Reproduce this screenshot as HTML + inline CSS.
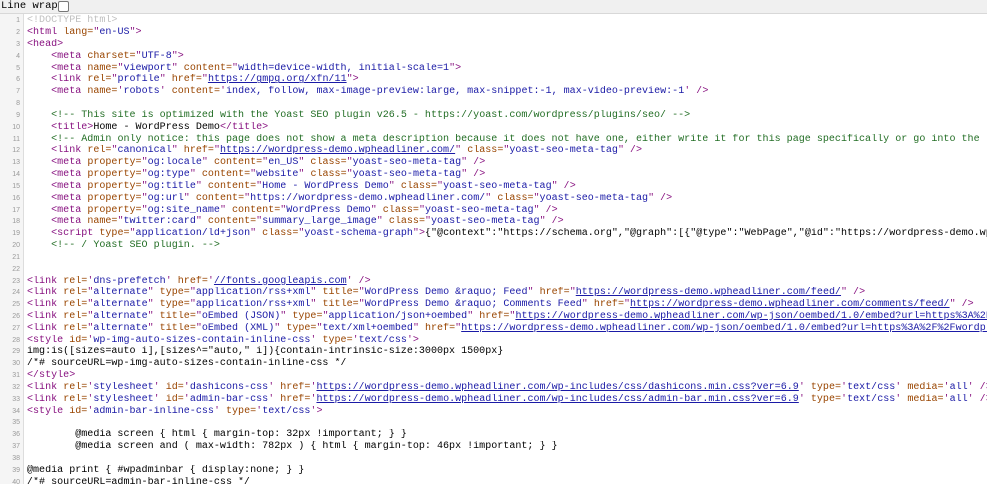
<!DOCTYPE html>
<html><head><meta charset="utf-8"><style>
html,body{margin:0;padding:0;background:#fff;width:987px;height:481px;overflow:hidden}
#bar{position:absolute;left:0;top:0;width:987px;height:13px;background:#f0f0f0;border-bottom:1px solid #d8d8d8;font:10.5px "Liberation Mono",monospace;line-height:13px;color:#000}
#bar span{position:absolute;left:1px;top:0}
#bar i{position:absolute;left:58px;top:1px;width:9px;height:9px;border:1px solid #777;border-radius:2px;background:#fff}
#gut{position:absolute;left:0;top:14px;width:23px;height:470px;background:#f5f5f5;border-right:1px solid #ddd}
#src{position:absolute;left:0;top:15.3px;width:987px}
.r{height:11.84px;line-height:11.84px;white-space:pre;font:10.05px "Liberation Mono",monospace;color:#000;position:relative;overflow:hidden}
.n{position:absolute;left:0;width:20px;text-align:right;font:7px "Liberation Sans",sans-serif;color:#999;line-height:11.84px}
.c0{position:absolute;left:27px;top:0}
.t{color:#881280}.a{color:#994500}.v{color:#1a1aa6}.c{color:#236e25}.d{color:#c0c0c0}.l{color:#1a1aa6;text-decoration:underline}
</style></head><body>
<div id="bar"><span>Line wrap</span><i></i></div>
<div id="gut"></div>
<div id="src">
<div class="r"><span class="n">1</span><span class="c0 d">&lt;!DOCTYPE html&gt;</span></div>
<div class="r"><span class="n">2</span><span class="c0"><span class="t">&lt;html </span><span class="a">lang=</span><span class="t">"</span><span class="v">en-US</span><span class="t">"&gt;</span></span></div>
<div class="r"><span class="n">3</span><span class="c0"><span class="t">&lt;head&gt;</span></span></div>
<div class="r"><span class="n">4</span><span class="c0">    <span class="t">&lt;meta </span><span class="a">charset=</span><span class="t">"</span><span class="v">UTF-8</span><span class="t">"&gt;</span></span></div>
<div class="r"><span class="n">5</span><span class="c0">    <span class="t">&lt;meta </span><span class="a">name=</span><span class="t">"</span><span class="v">viewport</span><span class="t">" </span><span class="a">content=</span><span class="t">"</span><span class="v">width=device-width, initial-scale=1</span><span class="t">"&gt;</span></span></div>
<div class="r"><span class="n">6</span><span class="c0">    <span class="t">&lt;link </span><span class="a">rel=</span><span class="t">"</span><span class="v">profile</span><span class="t">" </span><span class="a">href=</span><span class="t">"</span><span class="l">https://gmpg.org/xfn/11</span><span class="t">"&gt;</span></span></div>
<div class="r"><span class="n">7</span><span class="c0">    <span class="t">&lt;meta </span><span class="a">name=</span><span class="t">'</span><span class="v">robots</span><span class="t">' </span><span class="a">content=</span><span class="t">'</span><span class="v">index, follow, max-image-preview:large, max-snippet:-1, max-video-preview:-1</span><span class="t">' /&gt;</span></span></div>
<div class="r"><span class="n">8</span></div>
<div class="r"><span class="n">9</span><span class="c0">    <span class="c">&lt;!-- This site is optimized with the Yoast SEO plugin v26.5 - https://yoast.com/wordpress/plugins/seo/ --&gt;</span></span></div>
<div class="r"><span class="n">10</span><span class="c0">    <span class="t">&lt;title&gt;</span>Home - WordPress Demo<span class="t">&lt;/title&gt;</span></span></div>
<div class="r"><span class="n">11</span><span class="c0">    <span class="c">&lt;!-- Admin only notice: this page does not show a meta description because it does not have one, either write it for this page specifically or go into the</span></span></div>
<div class="r"><span class="n">12</span><span class="c0">    <span class="t">&lt;link </span><span class="a">rel=</span><span class="t">"</span><span class="v">canonical</span><span class="t">" </span><span class="a">href=</span><span class="t">"</span><span class="l">https://wordpress-demo.wpheadliner.com/</span><span class="t">" </span><span class="a">class=</span><span class="t">"</span><span class="v">yoast-seo-meta-tag</span><span class="t">" /&gt;</span></span></div>
<div class="r"><span class="n">13</span><span class="c0">    <span class="t">&lt;meta </span><span class="a">property=</span><span class="t">"</span><span class="v">og:locale</span><span class="t">" </span><span class="a">content=</span><span class="t">"</span><span class="v">en_US</span><span class="t">" </span><span class="a">class=</span><span class="t">"</span><span class="v">yoast-seo-meta-tag</span><span class="t">" /&gt;</span></span></div>
<div class="r"><span class="n">14</span><span class="c0">    <span class="t">&lt;meta </span><span class="a">property=</span><span class="t">"</span><span class="v">og:type</span><span class="t">" </span><span class="a">content=</span><span class="t">"</span><span class="v">website</span><span class="t">" </span><span class="a">class=</span><span class="t">"</span><span class="v">yoast-seo-meta-tag</span><span class="t">" /&gt;</span></span></div>
<div class="r"><span class="n">15</span><span class="c0">    <span class="t">&lt;meta </span><span class="a">property=</span><span class="t">"</span><span class="v">og:title</span><span class="t">" </span><span class="a">content=</span><span class="t">"</span><span class="v">Home - WordPress Demo</span><span class="t">" </span><span class="a">class=</span><span class="t">"</span><span class="v">yoast-seo-meta-tag</span><span class="t">" /&gt;</span></span></div>
<div class="r"><span class="n">16</span><span class="c0">    <span class="t">&lt;meta </span><span class="a">property=</span><span class="t">"</span><span class="v">og:url</span><span class="t">" </span><span class="a">content=</span><span class="t">"</span><span class="v">https://wordpress-demo.wpheadliner.com/</span><span class="t">" </span><span class="a">class=</span><span class="t">"</span><span class="v">yoast-seo-meta-tag</span><span class="t">" /&gt;</span></span></div>
<div class="r"><span class="n">17</span><span class="c0">    <span class="t">&lt;meta </span><span class="a">property=</span><span class="t">"</span><span class="v">og:site_name</span><span class="t">" </span><span class="a">content=</span><span class="t">"</span><span class="v">WordPress Demo</span><span class="t">" </span><span class="a">class=</span><span class="t">"</span><span class="v">yoast-seo-meta-tag</span><span class="t">" /&gt;</span></span></div>
<div class="r"><span class="n">18</span><span class="c0">    <span class="t">&lt;meta </span><span class="a">name=</span><span class="t">"</span><span class="v">twitter:card</span><span class="t">" </span><span class="a">content=</span><span class="t">"</span><span class="v">summary_large_image</span><span class="t">" </span><span class="a">class=</span><span class="t">"</span><span class="v">yoast-seo-meta-tag</span><span class="t">" /&gt;</span></span></div>
<div class="r"><span class="n">19</span><span class="c0">    <span class="t">&lt;script </span><span class="a">type=</span><span class="t">"</span><span class="v">application/ld+json</span><span class="t">" </span><span class="a">class=</span><span class="t">"</span><span class="v">yoast-schema-graph</span><span class="t">"&gt;</span>{"@context":"https://schema.org","@graph":[{"@type":"WebPage","@id":"https://wordpress-demo.wpheadliner.com/"</span></div>
<div class="r"><span class="n">20</span><span class="c0">    <span class="c">&lt;!-- / Yoast SEO plugin. --&gt;</span></span></div>
<div class="r"><span class="n">21</span></div>
<div class="r"><span class="n">22</span></div>
<div class="r"><span class="n">23</span><span class="c0"><span class="t">&lt;link </span><span class="a">rel=</span><span class="t">'</span><span class="v">dns-prefetch</span><span class="t">' </span><span class="a">href=</span><span class="t">'</span><span class="l">//fonts.googleapis.com</span><span class="t">' /&gt;</span></span></div>
<div class="r"><span class="n">24</span><span class="c0"><span class="t">&lt;link </span><span class="a">rel=</span><span class="t">"</span><span class="v">alternate</span><span class="t">" </span><span class="a">type=</span><span class="t">"</span><span class="v">application/rss+xml</span><span class="t">" </span><span class="a">title=</span><span class="t">"</span><span class="v">WordPress Demo &amp;raquo; Feed</span><span class="t">" </span><span class="a">href=</span><span class="t">"</span><span class="l">https://wordpress-demo.wpheadliner.com/feed/</span><span class="t">" /&gt;</span></span></div>
<div class="r"><span class="n">25</span><span class="c0"><span class="t">&lt;link </span><span class="a">rel=</span><span class="t">"</span><span class="v">alternate</span><span class="t">" </span><span class="a">type=</span><span class="t">"</span><span class="v">application/rss+xml</span><span class="t">" </span><span class="a">title=</span><span class="t">"</span><span class="v">WordPress Demo &amp;raquo; Comments Feed</span><span class="t">" </span><span class="a">href=</span><span class="t">"</span><span class="l">https://wordpress-demo.wpheadliner.com/comments/feed/</span><span class="t">" /&gt;</span></span></div>
<div class="r"><span class="n">26</span><span class="c0"><span class="t">&lt;link </span><span class="a">rel=</span><span class="t">"</span><span class="v">alternate</span><span class="t">" </span><span class="a">title=</span><span class="t">"</span><span class="v">oEmbed (JSON)</span><span class="t">" </span><span class="a">type=</span><span class="t">"</span><span class="v">application/json+oembed</span><span class="t">" </span><span class="a">href=</span><span class="t">"</span><span class="l">https://wordpress-demo.wpheadliner.com/wp-json/oembed/1.0/embed?url=https%3A%2F%2F</span></span></div>
<div class="r"><span class="n">27</span><span class="c0"><span class="t">&lt;link </span><span class="a">rel=</span><span class="t">"</span><span class="v">alternate</span><span class="t">" </span><span class="a">title=</span><span class="t">"</span><span class="v">oEmbed (XML)</span><span class="t">" </span><span class="a">type=</span><span class="t">"</span><span class="v">text/xml+oembed</span><span class="t">" </span><span class="a">href=</span><span class="t">"</span><span class="l">https://wordpress-demo.wpheadliner.com/wp-json/oembed/1.0/embed?url=https%3A%2F%2Fwordpress</span></span></div>
<div class="r"><span class="n">28</span><span class="c0"><span class="t">&lt;style </span><span class="a">id=</span><span class="t">'</span><span class="v">wp-img-auto-sizes-contain-inline-css</span><span class="t">' </span><span class="a">type=</span><span class="t">'</span><span class="v">text/css</span><span class="t">'&gt;</span></span></div>
<div class="r"><span class="n">29</span><span class="c0">img:is([sizes=auto i],[sizes^="auto," i]){contain-intrinsic-size:3000px 1500px}</span></div>
<div class="r"><span class="n">30</span><span class="c0">/*# sourceURL=wp-img-auto-sizes-contain-inline-css */</span></div>
<div class="r"><span class="n">31</span><span class="c0"><span class="t">&lt;/style&gt;</span></span></div>
<div class="r"><span class="n">32</span><span class="c0"><span class="t">&lt;link </span><span class="a">rel=</span><span class="t">'</span><span class="v">stylesheet</span><span class="t">' </span><span class="a">id=</span><span class="t">'</span><span class="v">dashicons-css</span><span class="t">' </span><span class="a">href=</span><span class="t">'</span><span class="l">https://wordpress-demo.wpheadliner.com/wp-includes/css/dashicons.min.css?ver=6.9</span><span class="t">' </span><span class="a">type=</span><span class="t">'</span><span class="v">text/css</span><span class="t">' </span><span class="a">media=</span><span class="t">'</span><span class="v">all</span><span class="t">' /&gt;</span></span></div>
<div class="r"><span class="n">33</span><span class="c0"><span class="t">&lt;link </span><span class="a">rel=</span><span class="t">'</span><span class="v">stylesheet</span><span class="t">' </span><span class="a">id=</span><span class="t">'</span><span class="v">admin-bar-css</span><span class="t">' </span><span class="a">href=</span><span class="t">'</span><span class="l">https://wordpress-demo.wpheadliner.com/wp-includes/css/admin-bar.min.css?ver=6.9</span><span class="t">' </span><span class="a">type=</span><span class="t">'</span><span class="v">text/css</span><span class="t">' </span><span class="a">media=</span><span class="t">'</span><span class="v">all</span><span class="t">' /&gt;</span></span></div>
<div class="r"><span class="n">34</span><span class="c0"><span class="t">&lt;style </span><span class="a">id=</span><span class="t">'</span><span class="v">admin-bar-inline-css</span><span class="t">' </span><span class="a">type=</span><span class="t">'</span><span class="v">text/css</span><span class="t">'&gt;</span></span></div>
<div class="r"><span class="n">35</span></div>
<div class="r"><span class="n">36</span><span class="c0">        @media screen { html { margin-top: 32px !important; } }</span></div>
<div class="r"><span class="n">37</span><span class="c0">        @media screen and ( max-width: 782px ) { html { margin-top: 46px !important; } }</span></div>
<div class="r"><span class="n">38</span></div>
<div class="r"><span class="n">39</span><span class="c0">@media print { #wpadminbar { display:none; } }</span></div>
<div class="r"><span class="n">40</span><span class="c0">/*# sourceURL=admin-bar-inline-css */</span></div>
</div>
</body></html>
